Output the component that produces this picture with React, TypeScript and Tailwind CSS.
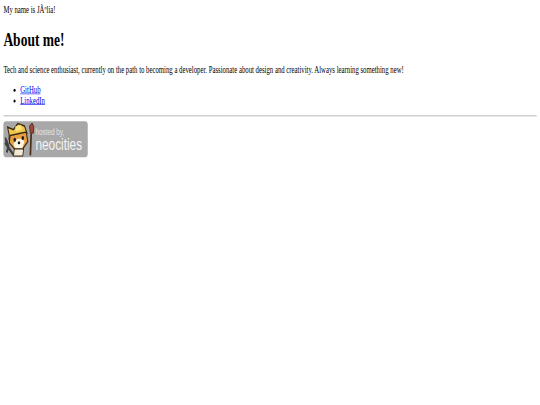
export default function App() {
  return (
    <div className="h-[405px] w-[540px] overflow-hidden bg-white">
      <div className="h-[675px] w-[1280px] origin-top-left scale-x-[.421875] scale-y-[.6] p-2 font-['Liberation_Serif',serif] text-[16px] leading-[18px] text-black">
        <p>My name is JÃºlia!</p>
        <h1 className="mt-[21px] text-[32px] leading-[37px] font-bold">About me!</h1>
        <p className="mt-[23px]">Tech and science enthusiast, currently on the path to becoming a developer. Passionate about design and creativity. Always learning something new!</p>
        <ul className="mt-4 list-disc pl-10">
          <li><a href="#" className="text-[#0000ee] underline">GitHub</a></li>
          <li><a href="#" className="text-[#0000ee] underline">LinkedIn</a></li>
        </ul>
        <hr className="mt-[15px] border-t-2 border-[#c4c4c4]" />
        <div className="relative mt-2 h-[60px] w-[200px] overflow-hidden rounded-[6px] bg-[#a8a8a8]">
          <svg className="absolute left-0 top-0" width="76" height="60" viewBox="0 0 76 60">
            <path d="M6 30 L12 42 L8 52 M4 36 L18 50 L24 56" stroke="#3f3f3f" strokeWidth="4.5" fill="none" />
            <path d="M6 34 L5 27 M13 31 L14 25" stroke="#3f3f3f" strokeWidth="3" fill="none" />
            <path d="M14 24 L10 10 L24 14 L34 4 L50 8 L56 20 L48 20 L20 26 Z" fill="#f0c64a" stroke="#3a2a12" strokeWidth="2.5" />
            <path d="M28 9 L42 6 L44 14 L30 17 Z" fill="#fbe27a" />
            <path d="M16 24 L54 18 L58 34 L46 46 L26 46 L14 36 Z" fill="#eba03f" stroke="#3a2a12" strokeWidth="2.5" />
            <path d="M24 38 Q36 22 50 34 L44 46 L28 46 Z" fill="#fff7e6" />
            <ellipse cx="27" cy="31" rx="3" ry="3.5" fill="#1c1c1c" />
            <ellipse cx="46" cy="28" rx="3" ry="3.5" fill="#1c1c1c" />
            <ellipse cx="37" cy="36" rx="3" ry="2.5" fill="#1c1c1c" />
            <path d="M26 46 L48 46 L46 58 L24 58 Z" fill="#f3ead8" stroke="#3a2a12" strokeWidth="2" />
            <path d="M66 20 L64 57" stroke="#4a2f18" strokeWidth="4" fill="none" />
            <path d="M64 20 L62 8 L68 3 L72 9 L71 20 Z" fill="#a8453c" stroke="#3a2a12" strokeWidth="1.5" />
          </svg>
          <span className="absolute left-[76px] top-[10px] font-['Liberation_Sans',sans-serif] text-[15px] leading-[15px] text-[#e4e4e4]">hosted by,</span>
          <span className="absolute left-[76px] top-[25px] font-['Liberation_Sans',sans-serif] text-[28px] leading-[28px] text-[#f4f4f4]">neocities</span>
        </div>
      </div>
    </div>
  );
}
